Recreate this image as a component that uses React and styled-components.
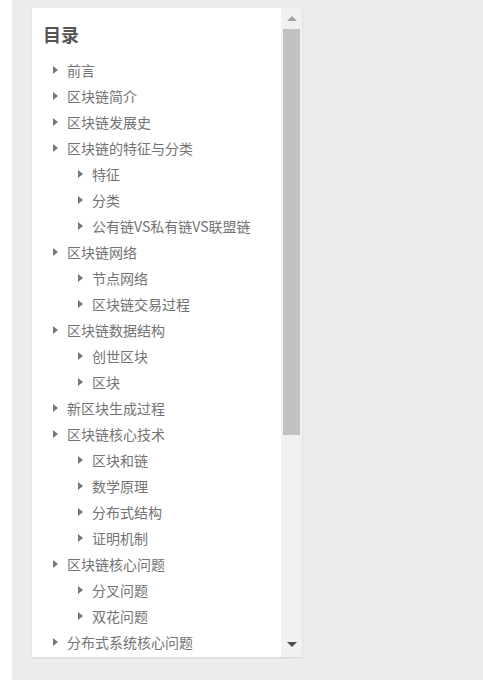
import React from "react";
import styled, { createGlobalStyle } from "styled-components";

const GlobalStyle = createGlobalStyle`
  html, body {
    margin: 0;
    padding: 0;
    background: #fff;
    font-family: "Liberation Sans", "Noto Sans CJK SC", sans-serif;
  }
`;

const Page = styled.div`
  margin-left: 12px;
  min-height: 680px;
  background: #ececec;
  padding: 8px 0 0 20px;
  box-sizing: border-box;
`;

const Card = styled.div`
  width: 270px;
  height: 649px;
  background: #fff;
  display: flex;
  overflow: hidden;
  box-shadow: 0 1px 2px rgba(60, 90, 140, 0.18);
`;

const Content = styled.div`
  flex: 1;
  overflow: hidden;
  padding: 14px 0 0 11px;
`;

const Title = styled.h3`
  margin: 0 0 11px;
  font-size: 18px;
  line-height: 24px;
  font-weight: bold;
  color: #555;
  font-family: "Noto Sans CJK SC", sans-serif;
`;

const List = styled.ul`
  list-style: none;
  margin: 0;
  padding: 0;
`;

const Item = styled.li`
  display: flex;
  align-items: center;
  height: 26px;
  padding-left: ${(p) => (p.$level === 2 ? 35 : 10)}px;
  font-size: 14px;
  color: #737373;
  white-space: nowrap;
  font-family: "Noto Sans CJK SC", sans-serif;
`;

const Caret = styled.span`
  width: 0;
  height: 0;
  border-left: 5px solid #777;
  border-top: 4.5px solid transparent;
  border-bottom: 4.5px solid transparent;
  margin-right: 9px;
  flex-shrink: 0;
`;

const Scrollbar = styled.div`
  width: 21px;
  background: #f1f1f1;
  display: flex;
  flex-direction: column;
  align-items: center;
`;

const Arrow = styled.div`
  height: ${(p) => p.$h}px;
  width: 100%;
  display: flex;
  align-items: center;
  justify-content: center;
  &::after {
    content: "";
    width: 0;
    height: 0;
    border-left: 5px solid transparent;
    border-right: 5px solid transparent;
    ${(p) =>
      p.$up
        ? `border-bottom: 5px solid ${p.$color};`
        : `border-top: 5px solid ${p.$color};`}
  }
`;

const Track = styled.div`
  flex: 1;
  width: 100%;
  display: flex;
  justify-content: center;
`;

const Thumb = styled.div`
  width: 17px;
  height: 406px;
  background: #c1c1c1;
`;

const items = [
  [1, "前言"],
  [1, "区块链简介"],
  [1, "区块链发展史"],
  [1, "区块链的特征与分类"],
  [2, "特征"],
  [2, "分类"],
  [2, "公有链VS私有链VS联盟链"],
  [1, "区块链网络"],
  [2, "节点网络"],
  [2, "区块链交易过程"],
  [1, "区块链数据结构"],
  [2, "创世区块"],
  [2, "区块"],
  [1, "新区块生成过程"],
  [1, "区块链核心技术"],
  [2, "区块和链"],
  [2, "数学原理"],
  [2, "分布式结构"],
  [2, "证明机制"],
  [1, "区块链核心问题"],
  [2, "分叉问题"],
  [2, "双花问题"],
  [1, "分布式系统核心问题"],
];

export default function App() {
  return (
    <>
      <GlobalStyle />
      <Page>
        <Card>
          <Content>
            <Title>目录</Title>
            <List>
              {items.map(([level, text]) => (
                <Item key={text} $level={level}>
                  <Caret />
                  {text}
                </Item>
              ))}
            </List>
          </Content>
          <Scrollbar>
            <Arrow $up $h={21} $color="#a3a3a3" />
            <Track>
              <Thumb />
            </Track>
            <Arrow $h={26} $color="#505050" />
          </Scrollbar>
        </Card>
      </Page>
    </>
  );
}
